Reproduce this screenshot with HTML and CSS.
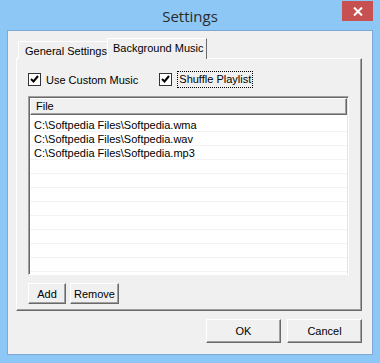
FILE: index.html
```html
<!DOCTYPE html>
<html lang="en">
<head>
    <meta charset="UTF-8">
    <title>Settings</title>
    <link rel="stylesheet" href="styles.css">
</head>
<body>

<div class="window">
    <!-- title bar -->
    <div class="titlebar">
        Settings
        <a class="close-button">
            <svg width="10" height="9" viewBox="0 0 10 9"><path d="M1 0.5 L9 8.5 M9 0.5 L1 8.5" stroke="#fff" stroke-width="2"/></svg>
        </a>
    </div>

    <div class="client">
        <div class="tabs">
            <div class="tab">General Settings</div>
            <div class="tab active">Background Music</div>
        </div>

        <div class="panel">
            <div class="check-row">
                <label class="check">
                    <span class="box"><svg width="11" height="11" viewBox="0 0 11 11"><path d="M2 5 L4.5 7.5 L9 2" stroke="#000" stroke-width="2" fill="none"/></svg></span>
                    Use Custom Music
                </label>
                <label class="check shuffle">
                    <span class="box"><svg width="11" height="11" viewBox="0 0 11 11"><path d="M2 5 L4.5 7.5 L9 2" stroke="#000" stroke-width="2" fill="none"/></svg></span>
                    <span class="focus">Shuffle Playlist</span>
                </label>
            </div>

            <div class="list">
                <div class="list-header"><span>File</span></div>
                <div class="list-body">
                    <div class="row">C:\Softpedia Files\Softpedia.wma</div>
                    <div class="row">C:\Softpedia Files\Softpedia.wav</div>
                    <div class="row">C:\Softpedia Files\Softpedia.mp3</div>
                </div>
            </div>

            <div class="list-buttons">
                <button class="btn add">Add</button>
                <button class="btn remove">Remove</button>
            </div>
        </div>

        <div class="dialog-buttons">
            <button class="btn wide">OK</button>
            <button class="btn wide">Cancel</button>
        </div>
    </div>
</div>

</body>
</html>
```

FILE: styles.css
```css
body {
    margin: 0;
    background: #8cc7f5;
    font-family: "Liberation Sans", Arial, sans-serif;
    font-size: 11px;
    color: #000;
}

.window {
    width: 380px;
    height: 363px;
}

.titlebar {
    position: relative;
    height: 30px;
    line-height: 32px;
    text-align: center;
    font-family: "Open Sans", "Noto Sans", sans-serif;
    font-size: 15px;
    color: #2b2b2b;
}

.close-button {
    position: absolute;
    top: 1px;
    right: 7px;
    width: 31px;
    height: 20px;
    background: #c75050;
    display: flex;
    align-items: center;
    justify-content: center;
}

.client {
    margin: 0 7px;
    height: 325px;
    box-sizing: border-box;
    background: #f0f0f0;
    border: 1px solid #7ea9d6;
    padding: 7px 10px 0 8px;
}

/* tabs */
.tabs {
    display: flex;
    align-items: flex-end;
    height: 21px;
    margin-bottom: -1px;
    position: relative;
}

.tab {
    height: 18px;
    line-height: 18px;
    box-sizing: border-box;
    padding: 0 0 0 6px;
    width: 90px;
    margin-left: 2px;
    white-space: nowrap;
    border: 1px solid #d9d9d9;
    border-bottom: none;
    border-left-color: #fff;
    border-top-color: #fff;
    border-right-color: #a0a0a0;
    background: #f0f0f0;
}

.tab.active {
    height: 21px;
    width: 100px;
    margin-left: -1px;
    line-height: 18px;
    padding-left: 5px;
    border-right: 1px solid #696969;
    position: relative;
    z-index: 1;
}

.panel {
    height: 253px;
    box-sizing: border-box;
    border: 1px solid #fff;
    border-right-color: #696969;
    border-bottom-color: #696969;
    box-shadow: inset -1px -1px 0 #a0a0a0;
    padding: 12px 0 0 11px;
}

.check-row {
    display: flex;
    height: 17px;
    align-items: center;
}

.check {
    display: flex;
    align-items: center;
    gap: 5px;
}

.check.shuffle {
    margin-left: 21px;
}

.box {
    width: 13px;
    height: 13px;
    box-sizing: border-box;
    border: 1px solid #333;
    background: #fff;
    display: flex;
    align-items: center;
    justify-content: center;
}

.focus {
    border: 1px dotted #000;
    padding: 1px 1px 2px 1px;
}

/* file list */
.list {
    margin-top: 8px;
    width: 321px;
    height: 179px;
    box-sizing: border-box;
    border: 1px solid #a0a0a0;
    border-right-color: #fff;
    border-bottom-color: #fff;
    box-shadow: inset 1px 1px 0 #696969, inset -1px -1px 0 #e3e3e3;
    padding: 1px;
    background: #fff;
}

.list-header {
    height: 17px;
    box-sizing: border-box;
    background: #f0f0f0;
    border: 1px solid #fff;
    border-right-color: #696969;
    border-bottom-color: #696969;
    box-shadow: inset -1px -1px 0 #a0a0a0;
    padding-left: 5px;
    line-height: 14px;
}

.list-body {
    height: 157px;
    padding-top: 3px;
    background: repeating-linear-gradient(#fff 0, #fff 13px, #f3f3f3 13px, #f3f3f3 14px);
    background-position: 0 3px;
}

.row {
    height: 14px;
    line-height: 14px;
    padding-left: 4px;
}

.list-buttons {
    display: flex;
    gap: 4px;
    margin-top: 8px;
}

/* buttons */
.btn {
    height: 21px;
    box-sizing: border-box;
    font-family: "Liberation Sans", Arial, sans-serif;
    font-size: 11px;
    color: #000;
    background: #f0f0f0;
    border: 1px solid #fff;
    border-right-color: #696969;
    border-bottom-color: #696969;
    box-shadow: inset -1px -1px 0 #a0a0a0;
    padding: 0;
}

.btn.add {
    width: 38px;
}

.btn.remove {
    width: 49px;
}

.dialog-buttons {
    display: flex;
    justify-content: flex-end;
    gap: 6px;
    margin-top: 8px;
}

.btn.wide {
    width: 75px;
    height: 24px;
}
```
